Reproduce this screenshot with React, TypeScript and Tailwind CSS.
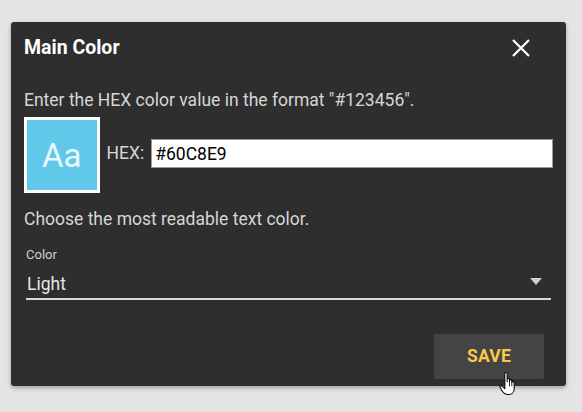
import React from "react"

export default function App() {
  return (
    <div className="w-[582px] h-[412px] bg-[#e4e4e4] pt-[22px] pl-[11px]" style={{ fontFamily: "Roboto, 'Liberation Sans', sans-serif" }}>
      <div className="w-[555px] h-[364px] bg-[#2e2e2e] rounded-[3px] shadow-[0_2px_4px_rgba(0,0,0,0.3)] flex flex-col px-[13px]">
        <div className="flex items-center justify-between h-[50px] pt-[1px]">
          <h2 className="text-white text-[19.5px] font-bold leading-none">Main Color</h2>
          <button className="mr-[22px] mt-[1px]">
            <svg width="20" height="20" viewBox="0 0 20 20">
              <path d="M2 2 L18 18 M18 2 L2 18" stroke="#fff" strokeWidth="2.2" />
            </svg>
          </button>
        </div>
        <p className="text-[#d6d6d6] text-[17.5px] mt-[18px] leading-[20px]">Enter the HEX color value in the format "#123456".</p>
        <div className="flex items-center mt-[7px]">
          <div className="w-[76px] h-[76px] border-[3px] border-white bg-[#60c8e9] flex items-center justify-center">
            <span className="text-[#e8f8fd] text-[33px] leading-none mt-[1px]">Aa</span>
          </div>
          <span className="text-[#d6d6d6] text-[17.5px] ml-[7px] mt-[-4px]">HEX:</span>
          <input
            readOnly
            value="#60C8E9"
            className="ml-[7px] mt-[-3px] w-[404px] h-[29px] bg-white border border-[#9a9a9a] text-black text-[17.5px] px-[3px] outline-none"
            style={{ fontFamily: "Roboto, 'Liberation Sans', sans-serif" }}
          />
        </div>
        <p className="text-[#d6d6d6] text-[17.5px] mt-[16px] leading-[20px]">Choose the most readable text color.</p>
        <div className="mt-[19px] ml-[2px] mr-[2px]">
          <div className="text-[#cfcfcf] text-[13px] leading-[14px]">Color</div>
          <div className="flex items-end justify-between h-[38px] border-b-[2px] border-[#d9d9d9] pb-[4px]">
            <span className="text-[#e6e6e6] text-[17.5px] leading-[20px] ml-[1px]">Light</span>
            <svg width="12" height="7" viewBox="0 0 12 7" className="mr-[9px] mb-[9px]">
              <path d="M0 0 L12 0 L6 7 Z" fill="#cfcfcf" />
            </svg>
          </div>
        </div>
        <div className="flex justify-end mt-[34px] mr-[9px]">
          <button className="relative w-[110px] h-[45px] bg-[#444444] rounded-[2px] text-[#f7c948] font-bold text-[17.5px] tracking-[0.2px]">
            SAVE
            <svg width="21" height="26" viewBox="0 0 18 22" className="absolute left-[65px] top-[37px]">
              <path
                d="M5 2 C5 0.8 7 0.8 7 2 L7 9 L7 7 C7 6 9 6 9 7 L9 9 L9 8 C9 7 11 7 11 8 L11 10 L11 9.5 C11 8.5 13 8.5 13 9.5 L13 15 C13 18 11 20 8.5 20 L7 20 C5 20 4 19 3 17.5 L1 14 C0.5 13 1.8 12 2.6 12.8 L5 15 Z"
                fill="#fff"
                stroke="#000"
                strokeWidth="0.9"
                strokeLinejoin="round"
              />
              <path d="M9 9 L9 13 M11 10 L11 13" stroke="#000" strokeWidth="0.7" />
            </svg>
          </button>
        </div>
      </div>
    </div>
  )
}
